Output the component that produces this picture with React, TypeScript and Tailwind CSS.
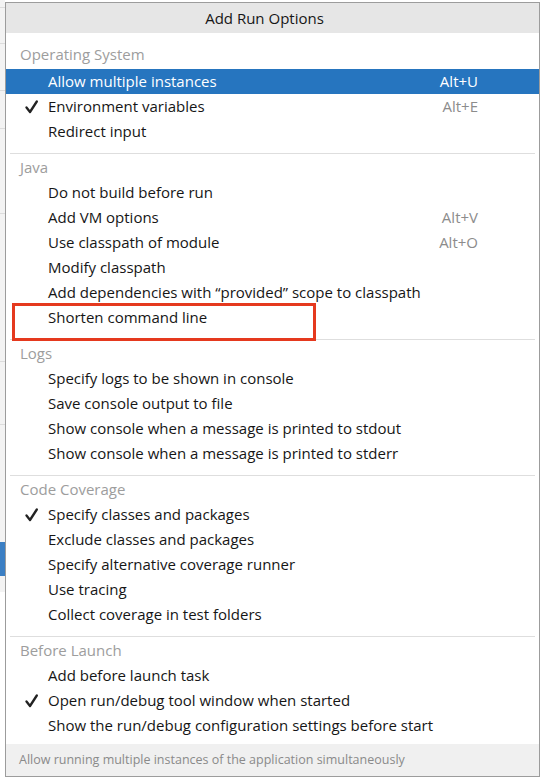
type Item = {
  label: string;
  shortcut?: string;
  checked?: boolean;
  selected?: boolean;
};

type Section = {
  title: string;
  items: Item[];
};

const sections: Section[] = [
  {
    title: "Operating System",
    items: [
      { label: "Allow multiple instances", shortcut: "Alt+U", selected: true },
      { label: "Environment variables", shortcut: "Alt+E", checked: true },
      { label: "Redirect input" },
    ],
  },
  {
    title: "Java",
    items: [
      { label: "Do not build before run" },
      { label: "Add VM options", shortcut: "Alt+V" },
      { label: "Use classpath of module", shortcut: "Alt+O" },
      { label: "Modify classpath" },
      { label: "Add dependencies with \u201cprovided\u201d scope to classpath" },
      { label: "Shorten command line" },
    ],
  },
  {
    title: "Logs",
    items: [
      { label: "Specify logs to be shown in console" },
      { label: "Save console output to file" },
      { label: "Show console when a message is printed to stdout" },
      { label: "Show console when a message is printed to stderr" },
    ],
  },
  {
    title: "Code Coverage",
    items: [
      { label: "Specify classes and packages", checked: true },
      { label: "Exclude classes and packages" },
      { label: "Specify alternative coverage runner" },
      { label: "Use tracing" },
      { label: "Collect coverage in test folders" },
    ],
  },
  {
    title: "Before Launch",
    items: [
      { label: "Add before launch task" },
      { label: "Open run/debug tool window when started", checked: true },
      { label: "Show the run/debug configuration settings before start" },
    ],
  },
];

function Check() {
  return (
    <svg width="13" height="14" viewBox="0 0 13 14" fill="none">
      <path d="M1.5 7.5 L5 12 L11.8 1.5" stroke="#222222" strokeWidth="2.3" strokeLinecap="round" strokeLinejoin="round" />
    </svg>
  );
}

function Row({ item }: { item: Item }) {
  return (
    <div
      className={`flex h-[25px] items-center pl-[19px] pr-[61px] ${
        item.selected ? "bg-[#2675bf] text-white" : "text-[#161616]"
      }`}
    >
      <div className="flex w-[23px] items-center">{item.checked && <Check />}</div>
      <span>{item.label}</span>
      {item.shortcut && (
        <span className={`ml-auto ${item.selected ? "text-white" : "text-[#8c8c8c]"}`}>
          {item.shortcut}
        </span>
      )}
    </div>
  );
}

export default function App() {
  return (
    <div className="relative flex h-[781px] w-[544px] overflow-hidden bg-white font-['Open_Sans','Noto_Sans',sans-serif] text-[15px]">
      {/* window behind the popup */}
      <div className="flex w-[5px] flex-col bg-[#f3f3f3]">
        <div className="mt-[7px] h-px bg-[#dcdcdc]" />
        <div className="mt-[35px] h-px bg-[#dcdcdc]" />
        <div className="mt-[46px] h-px bg-[#dcdcdc]" />
        <div className="mt-[37px] h-px bg-[#dcdcdc]" />
        <div className="mt-[84px] h-px bg-[#dcdcdc]" />
        <div className="mt-[147px] h-px bg-[#dcdcdc]" />
        <div className="mt-[62px] h-px bg-[#dcdcdc]" />
        <div className="mt-[117px] h-[34px] bg-[#3b7fc4]" />
        <div className="h-[16px] bg-[#f3f3f3]" />
        <div className="flex-1 bg-white" />
      </div>

      <div className="mt-[2px] flex h-[775px] w-[535px] flex-col border border-[#9c9c9c] bg-white">
        <div className="flex h-[30px] shrink-0 items-center justify-center bg-[#e6e6e6] pr-[16px] text-[#161616]">
          Add Run Options
        </div>

        {sections.map((section, i) => (
          <div key={section.title} className={i === 0 ? "pt-[9px]" : ""}>
            {i > 0 && <div className="mt-[9px] ml-[4px] mr-[4px] h-px bg-[#dedede]" />}
            <div className={`flex h-[25px] items-center pl-[14px] text-[#9d9d9d] ${i > 0 ? "mt-[1px]" : ""}`}>
              {section.title}
            </div>
            <div className={i === 0 ? "mt-[2px]" : ""}>
              {section.items.map((item) => (
                <Row key={item.label} item={item} />
              ))}
            </div>
          </div>
        ))}

        <div className="mt-auto flex h-[32px] shrink-0 items-center bg-[#f0f0f0] pl-[13px] text-[12.5px] text-[#8a8a8a]">
          Allow running multiple instances of the application simultaneously
        </div>
      </div>

      <div className="flex-1 bg-white" />

      {/* red annotation box */}
      <div className="absolute left-[12px] top-[303px] h-[38px] w-[304px] border-[3px] border-[#e5391e]" />
    </div>
  );
}
